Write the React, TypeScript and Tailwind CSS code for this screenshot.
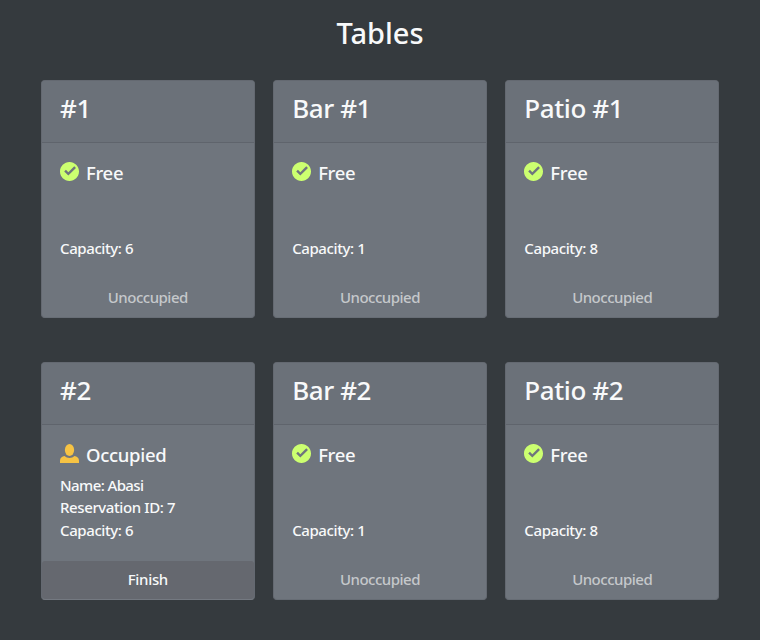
type Table = { name: string; occupied?: boolean; capacity: number };

const tables: Table[] = [
  { name: "#1", capacity: 6 },
  { name: "Bar #1", capacity: 1 },
  { name: "Patio #1", capacity: 8 },
  { name: "#2", occupied: true, capacity: 6 },
  { name: "Bar #2", capacity: 1 },
  { name: "Patio #2", capacity: 8 },
];

function StatusIcon({ occupied }: { occupied?: boolean }) {
  return (
    <svg viewBox="0 0 8 8" className={`mt-px h-[19px] w-[19px] shrink-0 ${occupied ? "text-[#f6c344]" : "text-[#ccff70]"}`} fill="currentColor">
      {occupied ? (
        <>
          <ellipse cx="4" cy="2.55" rx="1.95" ry="2.5" />
          <path d="M1.91 5.05C.85 5.1 0 5.92 0 7v1h8V7c0-1.08-.84-1.9-1.91-1.95C5.55 5.62 4.81 5.85 4 5.85S2.45 5.62 1.91 5.05z" />
        </>
      ) : (
        <path d="M4 0c-2.2 0-4 1.8-4 4s1.8 4 4 4 4-1.8 4-4-1.8-4-4-4zm2 1.78l.72.72-3.22 3.22-1.72-1.72.72-.72 1 1 2.5-2.5z" />
      )}
    </svg>
  );
}

function Card({ table }: { table: Table }) {
  return (
    <article className={`flex h-[238px] flex-col overflow-hidden rounded-[4px] border border-[#646971] bg-[#6f757d] ${table.occupied ? "border-b-[#747981]" : "border-b-[#676d75]"}`}>
      <header className="h-[62px] shrink-0 border-b border-[#5f646c] bg-[#6b7179] px-[18px] pt-[8px]">
        <h2 className="text-[26px] leading-[38px] tracking-[-0.4px]">{table.name}</h2>
      </header>
      <div className="flex grow flex-col px-[18px] pt-[18px]">
        <div className="flex gap-[7px]">
          <StatusIcon occupied={table.occupied} />
          <h3 className="text-[18.5px] leading-[24px] tracking-[-0.3px]">{table.occupied ? "Occupied" : "Free"}</h3>
        </div>
        <div className="mt-[7px] flex h-[68px] flex-col justify-end text-[15px] leading-[22.6px] tracking-[-0.4px]">
          {table.occupied && (
            <>
              <p className="tracking-[-0.6px]">Name: Abasi</p>
              <p className="-mt-px mb-px">Reservation ID: 7</p>
            </>
          )}
          <p>Capacity: {table.capacity}</p>
        </div>
      </div>
      {table.occupied ? (
        <button className="h-[38px] shrink-0 rounded-[3px] bg-[#65686f] text-[15px] font-medium leading-[36px] tracking-[-0.3px]"><span className="block h-[38px]">Finish</span></button>
      ) : (
        <p className="h-[38px] shrink-0 text-center text-[15px] leading-[36px] tracking-[-0.5px] text-[#c5c8cb]">Unoccupied</p>
      )}
    </article>
  );
}

export default function App() {
  return (
    <main className="h-[640px] w-[760px] bg-[#353a3e] px-[41px] pt-[13px] font-['Noto_Sans',sans-serif] font-medium text-[#f8f9fa]">
      <h1 className="mb-[27px] text-center text-[29px] font-medium leading-[40px]">Tables</h1>
      <section className="grid grid-cols-3 gap-x-[18.5px] gap-y-[44px]">
        {tables.map((table) => (
          <Card key={table.name} table={table} />
        ))}
      </section>
    </main>
  );
}
